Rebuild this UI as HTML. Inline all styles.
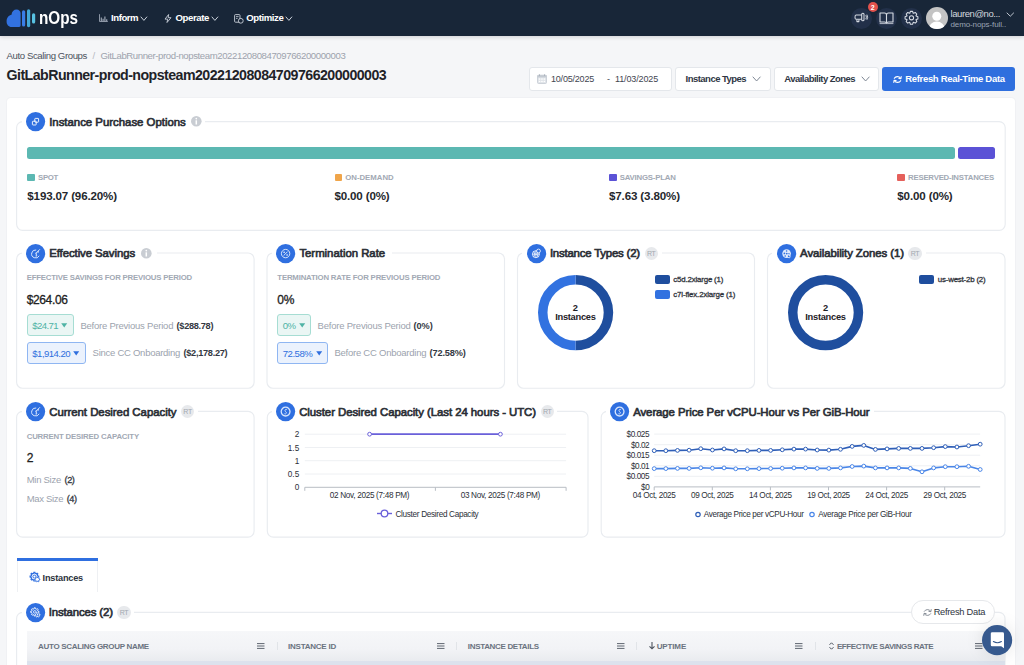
<!DOCTYPE html>
<html><head><meta charset="utf-8"><style>
html,body{margin:0;padding:0;}
body{width:1024px;height:665px;overflow:hidden;position:relative;background:#f5f6f8;font-family:"Liberation Sans",sans-serif;}
.a{position:absolute;}
.t{position:absolute;line-height:1;white-space:nowrap;}
svg.a{overflow:visible;}
</style></head><body>
<div class="a" style="left:0px;top:0px;width:1024px;height:36px;background:#182638;box-shadow:0 1px 4px rgba(20,30,45,0.18);"></div>
<svg class="a" style="left:0;top:0" width="90" height="36" viewBox="0 0 90 36">
<path d="M6.6 21.5 C6.6 17.5 9 15.4 11.5 14.8 C11.8 11.6 13.8 9.6 16.6 9.6 C19 9.6 20.6 11.4 20.6 13.2 L20.6 25.6 C20.6 26.5 20 27 19.2 27 L11.6 27 C8.6 27 6.6 24.6 6.6 21.5 Z" fill="#3272e0"/>
<rect x="22" y="10.2" width="3.2" height="16.4" rx="1.6" fill="#3a7ee6"/>
<rect x="27" y="9.2" width="3.2" height="18" rx="1.6" fill="#43a9d8"/>
<rect x="32" y="13.2" width="3.2" height="10.4" rx="1.6" fill="#58c2e2"/>
</svg>
<div class="t" style="left:38.6px;top:8.5px;font-size:18px;font-weight:700;color:#fff;transform:scaleX(0.85);transform-origin:0 0;">nOps</div>
<svg class="a" style="left:98.5px;top:14px" width="9" height="8" viewBox="0 0 9 8">
<path d="M0.5 0.2 V7.5 H8.8" fill="none" stroke="#9aa3b2" stroke-width="0.9"/>
<path d="M2.3 7.2 V3.6 M4.1 7.2 V4.8 M5.9 7.2 V2.6 M7.7 7.2 V5.2" stroke="#9aa3b2" stroke-width="1.2"/>
</svg>
<div class="t" style="left:111.00px;top:13.30px;font-size:9.6px;font-weight:700;color:#ffffff;letter-spacing:-0.444px;">Inform</div>
<svg class="a" style="left:140.4px;top:15.600000000000001px" width="7.8" height="5.4" viewBox="-1 -1 7.8 5.4"><path d="M0 0 L2.9 3.4 L5.8 0" fill="none" stroke="#c9d0da" stroke-width="1.0" stroke-linecap="round" stroke-linejoin="round"/></svg>
<svg class="a" style="left:164px;top:13.5px" width="8" height="9" viewBox="0 0 8 9">
<path d="M4.6 0.5 L1 5.1 H3.7 L3 8.5 L7 3.7 H4.2 Z" fill="none" stroke="#c9d0da" stroke-width="0.9" stroke-linejoin="round"/>
</svg>
<div class="t" style="left:175.50px;top:13.30px;font-size:9.6px;font-weight:700;color:#ffffff;letter-spacing:-0.397px;">Operate</div>
<svg class="a" style="left:211.4px;top:15.600000000000001px" width="7.8" height="5.4" viewBox="-1 -1 7.8 5.4"><path d="M0 0 L2.9 3.4 L5.8 0" fill="none" stroke="#c9d0da" stroke-width="1.0" stroke-linecap="round" stroke-linejoin="round"/></svg>
<svg class="a" style="left:233.5px;top:13.5px" width="10" height="10" viewBox="0 0 10 10">
<rect x="0.6" y="0.6" width="5.4" height="7.6" rx="0.9" fill="none" stroke="#c9d0da" stroke-width="0.9"/>
<path d="M2 2.6 H4.6 M2 4.4 H3.6" stroke="#c9d0da" stroke-width="0.8"/>
<circle cx="6.8" cy="6.8" r="2.4" fill="#182638" stroke="#c9d0da" stroke-width="0.9"/>
</svg>
<div class="t" style="left:246.30px;top:13.30px;font-size:9.6px;font-weight:700;color:#ffffff;letter-spacing:-0.442px;">Optimize</div>
<svg class="a" style="left:285.4px;top:15.600000000000001px" width="7.8" height="5.4" viewBox="-1 -1 7.8 5.4"><path d="M0 0 L2.9 3.4 L5.8 0" fill="none" stroke="#c9d0da" stroke-width="1.0" stroke-linecap="round" stroke-linejoin="round"/></svg>
<div class="a" style="left:851.0px;top:7.5px;width:21px;height:21px;background:#223049;border-radius:50%;"></div>
<div class="a" style="left:876.0px;top:7.5px;width:21px;height:21px;background:#223049;border-radius:50%;"></div>
<div class="a" style="left:901.0px;top:7.5px;width:21px;height:21px;background:#223049;border-radius:50%;"></div>
<svg class="a" style="left:852px;top:9px" width="20" height="16" viewBox="0 0 20 16">
<g fill="none" stroke="#d6dbe3" stroke-width="1.05" stroke-linejoin="round">
<path d="M9.7 6 H4 Q3 6 3 8.15 Q3 10.3 4 10.3 H9.7"/>
<rect x="9.7" y="4.2" width="2.3" height="7.6" rx="1"/>
<path d="M4.9 10.4 V12.6 H6.9 V10.4"/>
<path d="M13.8 6.2 Q15.1 8.2 13.8 10.2 M14.9 5.6 Q16.5 8.2 14.9 10.8" stroke-width="0.9"/>
</g></svg>
<div class="a" style="left:867.7px;top:1.8px;width:10px;height:10px;background:#e2524d;border-radius:50%;"></div>
<div class="t" style="left:870.75px;top:3.80px;font-size:7px;font-weight:700;color:#ffffff;">2</div>
<svg class="a" style="left:879px;top:11px" width="15" height="14" viewBox="0 0 15 14">
<path d="M1 2 H5.5 Q7.5 2 7.5 4 V12 Q7.5 11 5.5 11 H1 Z M14 2 H9.5 Q7.5 2 7.5 4 V12 Q7.5 11 9.5 11 H14 Z" fill="none" stroke="#d6dbe3" stroke-width="1.1" stroke-linejoin="round"/>
<path d="M0.6 12.6 H14.4" stroke="#d6dbe3" stroke-width="0.8"/>
</svg>
<svg class="a" style="left:0;top:0" width="1024" height="36"><g fill="none" stroke="#d6dbe3" stroke-width="1.05" stroke-linejoin="round"><path d="M916.09 16.07 L917.91 16.70 L917.91 18.90 L916.09 19.53 L915.96 19.82 L916.81 21.55 L915.25 23.11 L913.52 22.26 L913.23 22.39 L912.60 24.21 L910.40 24.21 L909.77 22.39 L909.48 22.26 L907.75 23.11 L906.19 21.55 L907.04 19.82 L906.91 19.53 L905.09 18.90 L905.09 16.70 L906.91 16.07 L907.04 15.78 L906.19 14.05 L907.75 12.49 L909.48 13.34 L909.77 13.21 L910.40 11.39 L912.60 11.39 L913.23 13.21 L913.52 13.34 L915.25 12.49 L916.81 14.05 L915.96 15.78 Z"/><circle cx="911.5" cy="17.8" r="2.1"/></g></svg>
<svg class="a" style="left:926px;top:7px" width="22" height="22" viewBox="0 0 22 22">
<defs><clipPath id="av"><circle cx="11" cy="11" r="11"/></clipPath></defs>
<circle cx="11" cy="11" r="11" fill="#c4c4c4"/>
<g clip-path="url(#av)" fill="#ffffff"><circle cx="10.8" cy="9.2" r="4.5"/><ellipse cx="10.8" cy="22" rx="8" ry="7.6"/></g>
</svg>
<div class="t" style="left:950.50px;top:9.00px;font-size:9.5px;font-weight:400;color:#d3d8df;letter-spacing:-0.420px;">lauren@no...</div>
<div class="t" style="left:950.50px;top:20.50px;font-size:8px;font-weight:400;color:#9aa4b3;letter-spacing:-0.116px;">demo-nops-full..</div>
<svg class="a" style="left:1006.3px;top:11.6px" width="8.6" height="5.2" viewBox="-1 -1 8.6 5.2"><path d="M0 0 L3.3 3.2 L6.6 0" fill="none" stroke="#c0c7d1" stroke-width="1.0" stroke-linecap="round" stroke-linejoin="round"/></svg>
<div class="t" style="left:6.50px;top:50.60px;font-size:9.6px;font-weight:400;color:#4b525d;letter-spacing:-0.397px;">Auto Scaling Groups</div>
<div class="t" style="left:92.50px;top:50.60px;font-size:9.6px;font-weight:400;color:#b5bac2;">/</div>
<div class="t" style="left:100.50px;top:50.60px;font-size:9.6px;font-weight:400;color:#9da3ad;letter-spacing:-0.411px;">GitLabRunner-prod-nopsteam20221208084709766200000003</div>
<div class="t" style="left:6.50px;top:67.70px;font-size:14.2px;font-weight:700;color:#1f2328;letter-spacing:-0.540px;">GitLabRunner-prod-nopsteam20221208084709766200000003</div>
<div class="a" style="left:528.5px;top:67px;width:143.5px;height:24px;background:#fff;border:1px solid #e4e7eb;border-radius:3px;box-sizing:border-box;"></div>
<svg class="a" style="left:536.5px;top:73.5px" width="10" height="10" viewBox="0 0 10 10">
<rect x="0.5" y="1.2" width="9" height="8.3" rx="1" fill="#dfe3e8" stroke="#c4cad2" stroke-width="0.8"/>
<rect x="0.5" y="1.2" width="9" height="2.2" fill="#c4cad2"/>
<path d="M2.5 0.3 V2 M7.5 0.3 V2" stroke="#aab1bb" stroke-width="0.9"/>
<g fill="#ffffff"><rect x="1.8" y="4.4" width="1.5" height="1.3"/><rect x="4.2" y="4.4" width="1.5" height="1.3"/><rect x="6.6" y="4.4" width="1.5" height="1.3"/><rect x="1.8" y="6.8" width="1.5" height="1.3"/><rect x="4.2" y="6.8" width="1.5" height="1.3"/><rect x="6.6" y="6.8" width="1.5" height="1.3"/></g>
</svg>
<div class="t" style="left:551.00px;top:75.20px;font-size:9px;font-weight:400;color:#3f4550;letter-spacing:-0.205px;">10/05/2025</div>
<div class="t" style="left:607.00px;top:75.20px;font-size:9px;font-weight:400;color:#3f4550;">-</div>
<div class="t" style="left:615.00px;top:75.20px;font-size:9px;font-weight:400;color:#3f4550;letter-spacing:-0.138px;">11/03/2025</div>
<div class="a" style="left:675px;top:67px;width:95.5px;height:24px;background:#fff;border:1px solid #e4e7eb;border-radius:3px;box-sizing:border-box;"></div>
<div class="t" style="left:685.60px;top:74.40px;font-size:9.5px;font-weight:700;color:#2f3744;letter-spacing:-0.531px;">Instance Types</div>
<svg class="a" style="left:751.6px;top:76.2px" width="9.2" height="6.0" viewBox="-1 -1 9.2 6.0"><path d="M0 0 L3.6 4.0 L7.2 0" fill="none" stroke="#7d8794" stroke-width="1.0" stroke-linecap="round" stroke-linejoin="round"/></svg>
<div class="a" style="left:773.8px;top:67px;width:105.7px;height:24px;background:#fff;border:1px solid #e4e7eb;border-radius:3px;box-sizing:border-box;"></div>
<div class="t" style="left:784.30px;top:74.40px;font-size:9.5px;font-weight:700;color:#2f3744;letter-spacing:-0.535px;">Availability Zones</div>
<svg class="a" style="left:861.2px;top:76.2px" width="9.2" height="6.0" viewBox="-1 -1 9.2 6.0"><path d="M0 0 L3.6 4.0 L7.2 0" fill="none" stroke="#7d8794" stroke-width="1.0" stroke-linecap="round" stroke-linejoin="round"/></svg>
<div class="a" style="left:882.3px;top:67px;width:133px;height:24px;background:#2f6fde;border-radius:3px;"></div>
<svg class="a" style="left:893px;top:75.5px" width="9" height="7" viewBox="0 0 9 7">
<path d="M7.6 2.2 Q6.4 0.5 4.3 0.6 Q2.3 0.7 1.3 2.3 M1.4 4.8 Q2.6 6.5 4.7 6.4 Q6.7 6.3 7.7 4.7" fill="none" stroke="#fff" stroke-width="1.1" stroke-linecap="round"/>
<path d="M8.2 0.6 L7.9 2.7 L5.9 2.4 M0.8 6.4 L1.1 4.3 L3.1 4.6" fill="none" stroke="#fff" stroke-width="1.1" stroke-linecap="round" stroke-linejoin="round"/>
</svg>
<div class="t" style="left:905.20px;top:74.40px;font-size:9.5px;font-weight:700;color:#ffffff;letter-spacing:-0.317px;">Refresh Real-Time Data</div>
<div class="a" style="left:6.5px;top:98px;width:1008.5px;height:600px;background:#fff;border-radius:3.5px;box-shadow:0 0 1.5px rgba(40,50,70,0.10);"></div>
<svg class="a" style="left:14px;top:119px" width="995" height="115"><rect x="2.60" y="2.60" width="988.60" height="108.70" rx="6" fill="none" stroke="#e9ecf0" stroke-width="1.15"/></svg>
<div class="a" style="left:22px;top:113.5px;width:183px;height:16px;background:#fff;"></div>
<svg class="a" style="left:26.10px;top:111.90px" width="19.2" height="19.2" viewBox="-9.6 -9.6 19.2 19.2"><circle cx="0" cy="0" r="9.6" fill="#2f6fe0"/><g fill="none" stroke="#fff" stroke-width="0.9"><rect x="-3.2" y="-0.4" width="3.8" height="3.8" rx="0.6"/><rect x="-0.8" y="-3.2" width="3.8" height="3.8" rx="0.6"/></g></svg>
<div class="t" style="left:49.20px;top:116.50px;font-size:11.4px;font-weight:400;color:#2a2e35;-webkit-text-stroke:0.65px #2a2e35;letter-spacing:-0.007px;">Instance Purchase Options</div>
<svg class="a" style="left:190.70px;top:116.20px" width="10.6" height="10.6" viewBox="-5.3 -5.3 10.6 10.6"><circle r="5.3" fill="#c9cdd3"/><rect x="-0.75" y="-1" width="1.5" height="4.2" fill="#fff"/><circle cx="0" cy="-2.7" r="0.85" fill="#fff"/></svg>
<div class="a" style="left:26.7px;top:146.6px;width:928.7px;height:12.3px;background:#5cb8b2;border-radius:2.5px;"></div>
<div class="a" style="left:958.1px;top:146.6px;width:36.9px;height:12.3px;background:#5b52d6;border-radius:2.5px;"></div>
<div class="a" style="left:27.3px;top:173.7px;width:7.6px;height:7.6px;background:#5cb8b2;border-radius:1px;"></div>
<div class="t" style="left:38.00px;top:174.40px;font-size:7.8px;font-weight:700;color:#a2a9b4;letter-spacing:-0.309px;">SPOT</div>
<div class="t" style="left:27.30px;top:190.40px;font-size:11.6px;font-weight:700;color:#25282d;letter-spacing:-0.158px;">$193.07 (96.20%)</div>
<div class="a" style="left:334.5px;top:173.7px;width:7.6px;height:7.6px;background:#f0a54a;border-radius:1px;"></div>
<div class="t" style="left:345.20px;top:174.40px;font-size:7.8px;font-weight:700;color:#a2a9b4;letter-spacing:-0.003px;">ON-DEMAND</div>
<div class="t" style="left:334.50px;top:190.40px;font-size:11.6px;font-weight:700;color:#25282d;letter-spacing:-0.174px;">$0.00 (0%)</div>
<div class="a" style="left:609px;top:173.7px;width:7.6px;height:7.6px;background:#5b52d6;border-radius:1px;"></div>
<div class="t" style="left:619.70px;top:174.40px;font-size:7.8px;font-weight:700;color:#a2a9b4;letter-spacing:-0.197px;">SAVINGS-PLAN</div>
<div class="t" style="left:609.00px;top:190.40px;font-size:11.6px;font-weight:700;color:#25282d;letter-spacing:-0.144px;">$7.63 (3.80%)</div>
<div class="a" style="left:897.3px;top:173.7px;width:7.6px;height:7.6px;background:#e5605b;border-radius:1px;"></div>
<div class="t" style="left:908.00px;top:174.40px;font-size:7.8px;font-weight:700;color:#a2a9b4;letter-spacing:-0.215px;">RESERVED-INSTANCES</div>
<div class="t" style="left:897.30px;top:190.40px;font-size:11.6px;font-weight:700;color:#25282d;letter-spacing:-0.144px;">$0.00 (0%)</div>
<svg class="a" style="left:14px;top:251px" width="244" height="141"><rect x="2.60" y="2.00" width="237.50" height="135.25" rx="6" fill="none" stroke="#e9ecf0" stroke-width="1.15"/></svg>
<svg class="a" style="left:265px;top:251px" width="243" height="141"><rect x="2.00" y="2.00" width="237.50" height="135.25" rx="6" fill="none" stroke="#e9ecf0" stroke-width="1.15"/></svg>
<svg class="a" style="left:515px;top:251px" width="243" height="141"><rect x="2.50" y="2.00" width="237.00" height="135.25" rx="6" fill="none" stroke="#e9ecf0" stroke-width="1.15"/></svg>
<svg class="a" style="left:765px;top:251px" width="243" height="141"><rect x="2.50" y="2.00" width="237.50" height="135.25" rx="6" fill="none" stroke="#e9ecf0" stroke-width="1.15"/></svg>
<div class="a" style="left:22px;top:245.2px;width:135px;height:16px;background:#fff;"></div>
<svg class="a" style="left:25.90px;top:243.60px" width="19.2" height="19.2" viewBox="-9.6 -9.6 19.2 19.2"><circle cx="0" cy="0" r="9.6" fill="#2f6fe0"/><g fill="none" stroke="#d9e6fc" stroke-width="1"><path d="M0.6 -3.6 A4 4 0 1 0 3.6 2.2"/><path d="M2.4 -2.4 L4.3 -4.3"/></g><rect x="1.6" y="-2.6" width="1.6" height="1.6" fill="#d9e6fc"/><g transform="translate(0.9 0.4) scale(0.85)"><path d="M0.7 -1.6 Q-1 -1.7 -1 -0.6 Q-1 0.2 -0.1 0.6 Q0.7 1 0.4 1.9 Q0 2.6 -1.1 2.3 M-0.2 -2.3 V3" fill="none" stroke="#d9e6fc" stroke-width="0.9"/></g></svg>
<div class="t" style="left:49.20px;top:248.20px;font-size:11.4px;font-weight:400;color:#2a2e35;-webkit-text-stroke:0.65px #2a2e35;letter-spacing:-0.079px;">Effective Savings</div>
<svg class="a" style="left:140.80px;top:248.20px" width="10.6" height="10.6" viewBox="-5.3 -5.3 10.6 10.6"><circle r="5.3" fill="#c9cdd3"/><rect x="-0.75" y="-1" width="1.5" height="4.2" fill="#fff"/><circle cx="0" cy="-2.7" r="0.85" fill="#fff"/></svg>
<div class="t" style="left:26.70px;top:274.20px;font-size:7.8px;font-weight:700;color:#a2a9b4;letter-spacing:-0.202px;">EFFECTIVE SAVINGS FOR PREVIOUS PERIOD</div>
<div class="t" style="left:26.70px;top:293.60px;font-size:12px;font-weight:400;color:#222;-webkit-text-stroke:0.3px #222;letter-spacing:-0.368px;">$264.06</div>
<div class="a" style="left:26.5px;top:314.3px;width:47.1px;height:21.3px;background:#eaf6f4;border:1px solid #a6ddd3;border-radius:3px;box-sizing:border-box;"></div>
<div class="t" style="left:32.30px;top:320.50px;font-size:9.6px;font-weight:400;color:#4fb3a5;letter-spacing:-0.594px;">$24.71</div>
<svg class="a" style="left:61.10px;top:322.60px" width="7" height="5" viewBox="0 0 7 5"><path d="M0.2 0.3 H6.2 L3.2 4.6 Z" fill="#4fb3a5"/></svg>
<div class="t" style="left:80.40px;top:320.50px;font-size:9.5px;font-weight:400;color:#9ca3ae;letter-spacing:-0.222px;">Before Previous Period</div>
<div class="t" style="left:176.60px;top:321.50px;font-size:9.2px;font-weight:700;color:#333842;letter-spacing:-0.309px;">($288.78)</div>
<div class="a" style="left:26.5px;top:342.4px;width:59.3px;height:21.3px;background:#ebf2fd;border:1px solid #8fb6f2;border-radius:3px;box-sizing:border-box;"></div>
<div class="t" style="left:32.30px;top:348.60px;font-size:9.6px;font-weight:400;color:#2f6fde;letter-spacing:-0.545px;">$1,914.20</div>
<svg class="a" style="left:73.30px;top:350.70px" width="7" height="5" viewBox="0 0 7 5"><path d="M0.2 0.3 H6.2 L3.2 4.6 Z" fill="#2f6fde"/></svg>
<div class="t" style="left:92.60px;top:348.30px;font-size:9.5px;font-weight:400;color:#9ca3ae;letter-spacing:-0.264px;">Since CC Onboarding</div>
<div class="t" style="left:183.50px;top:349.30px;font-size:9.2px;font-weight:700;color:#333842;letter-spacing:-0.287px;">($2,178.27)</div>
<div class="a" style="left:272px;top:245.2px;width:120px;height:16px;background:#fff;"></div>
<svg class="a" style="left:276.40px;top:243.60px" width="19.2" height="19.2" viewBox="-9.6 -9.6 19.2 19.2"><circle cx="0" cy="0" r="9.6" fill="#2f6fe0"/><g fill="none" stroke="#fff" stroke-width="0.8"><circle r="4.2"/><path d="M-2 2 L2 -2"/></g><circle cx="-1.5" cy="-1.4" r="0.8" fill="#fff"/><circle cx="1.5" cy="1.4" r="0.8" fill="#fff"/></svg>
<div class="t" style="left:299.40px;top:248.20px;font-size:11.4px;font-weight:400;color:#2a2e35;-webkit-text-stroke:0.65px #2a2e35;letter-spacing:-0.023px;">Termination Rate</div>
<div class="t" style="left:277.30px;top:274.20px;font-size:7.8px;font-weight:700;color:#a2a9b4;letter-spacing:-0.183px;">TERMINATION RATE FOR PREVIOUS PERIOD</div>
<div class="t" style="left:277.30px;top:293.60px;font-size:12px;font-weight:400;color:#222;-webkit-text-stroke:0.3px #222;letter-spacing:-0.172px;">0%</div>
<div class="a" style="left:277px;top:314.3px;width:34.3px;height:21.3px;background:#eaf6f4;border:1px solid #a6ddd3;border-radius:3px;box-sizing:border-box;"></div>
<div class="t" style="left:282.80px;top:320.50px;font-size:9.6px;font-weight:400;color:#4fb3a5;letter-spacing:-0.688px;">0%</div>
<svg class="a" style="left:298.80px;top:322.60px" width="7" height="5" viewBox="0 0 7 5"><path d="M0.2 0.3 H6.2 L3.2 4.6 Z" fill="#4fb3a5"/></svg>
<div class="t" style="left:317.60px;top:320.50px;font-size:9.5px;font-weight:400;color:#9ca3ae;letter-spacing:-0.213px;">Before Previous Period</div>
<div class="t" style="left:413.60px;top:321.50px;font-size:9.2px;font-weight:700;color:#333842;letter-spacing:-0.081px;">(0%)</div>
<div class="a" style="left:277px;top:342.4px;width:51px;height:21.3px;background:#ebf2fd;border:1px solid #8fb6f2;border-radius:3px;box-sizing:border-box;"></div>
<div class="t" style="left:282.80px;top:348.60px;font-size:9.6px;font-weight:400;color:#2f6fde;letter-spacing:-0.510px;">72.58%</div>
<svg class="a" style="left:315.50px;top:350.70px" width="7" height="5" viewBox="0 0 7 5"><path d="M0.2 0.3 H6.2 L3.2 4.6 Z" fill="#2f6fde"/></svg>
<div class="t" style="left:334.40px;top:348.30px;font-size:9.5px;font-weight:400;color:#9ca3ae;letter-spacing:-0.237px;">Before CC Onboarding</div>
<div class="t" style="left:429.60px;top:349.30px;font-size:9.2px;font-weight:700;color:#333842;letter-spacing:-0.154px;">(72.58%)</div>
<div class="a" style="left:522px;top:245.2px;width:140px;height:16px;background:#fff;"></div>
<svg class="a" style="left:526.60px;top:243.60px" width="19.2" height="19.2" viewBox="-9.6 -9.6 19.2 19.2"><circle cx="0" cy="0" r="9.6" fill="#2f6fe0"/><g fill="none" stroke="#fff" stroke-width="0.8"><circle cx="-0.7" cy="0.6" r="3.5"/><path d="M-4.2 0.6 H2.8 M-0.7 -2.9 V4.1 M-2.8 -2.1 Q-0.7 0.6 -2.8 3.3 M1.4 -2.1 Q-0.7 0.6 1.4 3.3"/></g><circle cx="1.9" cy="-2.6" r="1.9" fill="#2f6fe0" stroke="#fff" stroke-width="0.8"/></svg>
<div class="t" style="left:549.90px;top:248.20px;font-size:11.4px;font-weight:400;color:#2a2e35;-webkit-text-stroke:0.65px #2a2e35;letter-spacing:-0.193px;">Instance Types (2)</div>
<div class="a" style="left:644.6px;top:246.6px;width:13.2px;height:13.2px;background:#e7e9ec;border-radius:50%;"></div>
<div class="t" style="left:646.90px;top:249.80px;font-size:7px;font-weight:400;color:#a3a8b0;letter-spacing:-0.303px;">RT</div>
<svg class="a" style="left:537.80px;top:275.10px" width="75.2" height="75.2" viewBox="-37.6 -37.6 75.2 75.2"><path d="M0 -32.85 A32.85 32.85 0 0 1 0 32.85" fill="none" stroke="#1f4e9e" stroke-width="9.5"/><path d="M0 32.85 A32.85 32.85 0 0 1 0 -32.85" fill="none" stroke="#3272e0" stroke-width="9.5"/></svg>
<div class="t" style="left:572.81px;top:304.30px;font-size:9.3px;font-weight:700;color:#1e2126;">2</div>
<div class="t" style="left:555.20px;top:313.10px;font-size:9.3px;font-weight:700;color:#1e2126;letter-spacing:-0.278px;">Instances</div>
<div class="a" style="left:654.7px;top:275.1px;width:15.3px;height:8.7px;background:#1f4e9e;border-radius:2px;"></div>
<div class="t" style="left:673.30px;top:276.00px;font-size:7.9px;font-weight:400;color:#30343b;-webkit-text-stroke:0.3px #30343b;letter-spacing:-0.180px;">c5d.2xlarge (1)</div>
<div class="a" style="left:654.7px;top:290.4px;width:15.3px;height:8.7px;background:#3272e0;border-radius:2px;"></div>
<div class="t" style="left:673.30px;top:291.30px;font-size:7.9px;font-weight:400;color:#30343b;-webkit-text-stroke:0.3px #30343b;letter-spacing:-0.149px;">c7i-flex.2xlarge (1)</div>
<div class="a" style="left:772px;top:245.2px;width:154px;height:16px;background:#fff;"></div>
<svg class="a" style="left:776.60px;top:243.60px" width="19.2" height="19.2" viewBox="-9.6 -9.6 19.2 19.2"><circle cx="0" cy="0" r="9.6" fill="#2f6fe0"/><circle r="4.3" fill="#dfe9fb"/><g fill="#2f6fe0"><circle cx="0" cy="-2.6" r="0.8"/><circle cx="-2.2" cy="-0.2" r="0.9"/><circle cx="0.2" cy="0" r="0.9"/><circle cx="2.4" cy="0.2" r="0.7"/><circle cx="-1.4" cy="2.4" r="0.8"/></g><path d="M0.6 1.8 Q2 1 3.6 2.2 L3.2 4.2 L1 3.8 Z" fill="#2f6fe0" stroke="#fff" stroke-width="0.7"/></svg>
<div class="t" style="left:800.10px;top:248.20px;font-size:11.4px;font-weight:400;color:#2a2e35;-webkit-text-stroke:0.65px #2a2e35;letter-spacing:-0.077px;">Availability Zones (1)</div>
<div class="a" style="left:908.4px;top:246.6px;width:13.2px;height:13.2px;background:#e7e9ec;border-radius:50%;"></div>
<div class="t" style="left:910.70px;top:249.80px;font-size:7px;font-weight:400;color:#a3a8b0;letter-spacing:-0.303px;">RT</div>
<svg class="a" style="left:787.90px;top:275.10px" width="75.2" height="75.2" viewBox="-37.6 -37.6 75.2 75.2"><circle r="32.85" fill="none" stroke="#1f4e9e" stroke-width="9.5"/></svg>
<div class="t" style="left:822.91px;top:304.30px;font-size:9.3px;font-weight:700;color:#1e2126;">2</div>
<div class="t" style="left:805.30px;top:313.10px;font-size:9.3px;font-weight:700;color:#1e2126;letter-spacing:-0.278px;">Instances</div>
<div class="a" style="left:919px;top:275.1px;width:15.3px;height:8.7px;background:#1f4e9e;border-radius:2px;"></div>
<div class="t" style="left:937.80px;top:276.00px;font-size:7.9px;font-weight:400;color:#30343b;-webkit-text-stroke:0.3px #30343b;letter-spacing:-0.199px;">us-west-2b (2)</div>
<svg class="a" style="left:14px;top:409px" width="244" height="132"><rect x="2.60" y="2.40" width="237.50" height="125.70" rx="6" fill="none" stroke="#e9ecf0" stroke-width="1.15"/></svg>
<svg class="a" style="left:265px;top:409px" width="326" height="132"><rect x="2.30" y="2.40" width="320.70" height="125.70" rx="6" fill="none" stroke="#e9ecf0" stroke-width="1.15"/></svg>
<svg class="a" style="left:599px;top:409px" width="409" height="132"><rect x="2.20" y="2.40" width="403.80" height="125.70" rx="6" fill="none" stroke="#e9ecf0" stroke-width="1.15"/></svg>
<div class="a" style="left:22px;top:403.6px;width:176px;height:16px;background:#fff;"></div>
<svg class="a" style="left:25.90px;top:402.00px" width="19.2" height="19.2" viewBox="-9.6 -9.6 19.2 19.2"><circle cx="0" cy="0" r="9.6" fill="#2f6fe0"/><g fill="none" stroke="#d9e6fc" stroke-width="1"><path d="M0.6 -3.6 A4 4 0 1 0 3.6 2.2"/><path d="M2.4 -2.4 L4.3 -4.3"/></g><rect x="1.6" y="-2.6" width="1.6" height="1.6" fill="#d9e6fc"/><g transform="translate(0.9 0.4) scale(0.85)"><path d="M0.7 -1.6 Q-1 -1.7 -1 -0.6 Q-1 0.2 -0.1 0.6 Q0.7 1 0.4 1.9 Q0 2.6 -1.1 2.3 M-0.2 -2.3 V3" fill="none" stroke="#d9e6fc" stroke-width="0.9"/></g></svg>
<div class="t" style="left:49.20px;top:406.60px;font-size:11.4px;font-weight:400;color:#2a2e35;-webkit-text-stroke:0.65px #2a2e35;letter-spacing:-0.024px;">Current Desired Capacity</div>
<div class="a" style="left:181.0px;top:405.0px;width:13.2px;height:13.2px;background:#e7e9ec;border-radius:50%;"></div>
<div class="t" style="left:183.30px;top:408.20px;font-size:7px;font-weight:400;color:#a3a8b0;letter-spacing:-0.303px;">RT</div>
<div class="t" style="left:26.70px;top:433.00px;font-size:7.8px;font-weight:700;color:#a2a9b4;letter-spacing:-0.172px;">CURRENT DESIRED CAPACITY</div>
<div class="t" style="left:26.70px;top:451.60px;font-size:12px;font-weight:400;color:#222;-webkit-text-stroke:0.3px #222;">2</div>
<div class="t" style="left:26.70px;top:474.90px;font-size:9.5px;font-weight:400;color:#9ca3ae;letter-spacing:-0.279px;">Min Size</div>
<div class="t" style="left:64.60px;top:475.90px;font-size:9.2px;font-weight:400;color:#333842;-webkit-text-stroke:0.3px #333842;letter-spacing:-0.515px;">(2)</div>
<div class="t" style="left:26.70px;top:494.40px;font-size:9.5px;font-weight:400;color:#9ca3ae;letter-spacing:-0.309px;">Max Size</div>
<div class="t" style="left:66.80px;top:495.40px;font-size:9.2px;font-weight:400;color:#333842;-webkit-text-stroke:0.3px #333842;letter-spacing:-0.515px;">(4)</div>
<div class="a" style="left:272px;top:403.6px;width:285px;height:16px;background:#fff;"></div>
<svg class="a" style="left:276.30px;top:402.00px" width="19.2" height="19.2" viewBox="-9.6 -9.6 19.2 19.2"><circle cx="0" cy="0" r="9.6" fill="#2f6fe0"/><circle r="4.4" fill="none" stroke="#d9e6fc" stroke-width="1.3"/><path d="M0.9 -2.3 Q-0.6 -2.4 -0.6 -1.1 Q-0.6 -0.2 0.3 0.3 Q1 0.8 0.7 1.7 Q0.3 2.6 -0.8 2.3" fill="none" stroke="#d9e6fc" stroke-width="0.9" stroke-linecap="round"/></svg>
<div class="t" style="left:299.20px;top:406.60px;font-size:11.4px;font-weight:400;color:#2a2e35;-webkit-text-stroke:0.65px #2a2e35;letter-spacing:-0.054px;">Cluster Desired Capacity (Last 24 hours - UTC)</div>
<div class="a" style="left:540.6px;top:405.0px;width:13.2px;height:13.2px;background:#e7e9ec;border-radius:50%;"></div>
<div class="t" style="left:542.90px;top:408.20px;font-size:7px;font-weight:400;color:#a3a8b0;letter-spacing:-0.303px;">RT</div>
<svg class="a" style="left:0;top:0" width="1024" height="665"><line x1="304.8" x2="566.1" y1="434.2" y2="434.2" stroke="#eef0f3" stroke-width="1"/><line x1="304.8" x2="566.1" y1="447.5" y2="447.5" stroke="#eef0f3" stroke-width="1"/><line x1="304.8" x2="566.1" y1="460.7" y2="460.7" stroke="#eef0f3" stroke-width="1"/><line x1="304.8" x2="566.1" y1="474.0" y2="474.0" stroke="#eef0f3" stroke-width="1"/><line x1="304.8" x2="566.1" y1="487.3" y2="487.3" stroke="#b8bdc4" stroke-width="1"/><line x1="304.8" x2="304.8" y1="487.3" y2="490.8" stroke="#b8bdc4" stroke-width="1"/><line x1="435.4" x2="435.4" y1="487.3" y2="490.8" stroke="#b8bdc4" stroke-width="1"/><line x1="566.1" x2="566.1" y1="487.3" y2="490.8" stroke="#b8bdc4" stroke-width="1"/><line x1="369.6" x2="500.4" y1="434.2" y2="434.2" stroke="#6a60da" stroke-width="1.8"/><circle cx="369.6" cy="434.2" r="1.9" fill="#fff" stroke="#6a60da" stroke-width="1"/><circle cx="500.4" cy="434.2" r="1.9" fill="#fff" stroke="#6a60da" stroke-width="1"/><line x1="377" x2="392" y1="513.5" y2="513.5" stroke="#6a60da" stroke-width="1.4"/><circle cx="384.5" cy="513.5" r="3.3" fill="#fff" stroke="#6a60da" stroke-width="1.3"/></svg>
<div class="t" style="left:294.64px;top:431.20px;font-size:8.2px;font-weight:400;color:#2c3038;">2</div>
<div class="t" style="left:287.80px;top:444.50px;font-size:8.2px;font-weight:400;color:#2c3038;">1.5</div>
<div class="t" style="left:294.64px;top:457.70px;font-size:8.2px;font-weight:400;color:#2c3038;">1</div>
<div class="t" style="left:287.80px;top:471.00px;font-size:8.2px;font-weight:400;color:#2c3038;">0.5</div>
<div class="t" style="left:294.64px;top:484.30px;font-size:8.2px;font-weight:400;color:#2c3038;">0</div>
<div class="t" style="left:329.85px;top:492.20px;font-size:8.2px;font-weight:400;color:#2c3038;letter-spacing:-0.316px;">02 Nov, 2025 (7:48 PM)</div>
<div class="t" style="left:460.65px;top:492.20px;font-size:8.2px;font-weight:400;color:#2c3038;letter-spacing:-0.316px;">03 Nov, 2025 (7:48 PM)</div>
<div class="t" style="left:395.50px;top:511.20px;font-size:8.2px;font-weight:400;color:#2c3038;letter-spacing:-0.320px;">Cluster Desired Capacity</div>
<div class="a" style="left:606px;top:403.6px;width:268px;height:16px;background:#fff;"></div>
<svg class="a" style="left:610.30px;top:402.00px" width="19.2" height="19.2" viewBox="-9.6 -9.6 19.2 19.2"><circle cx="0" cy="0" r="9.6" fill="#2f6fe0"/><circle r="4.4" fill="none" stroke="#d9e6fc" stroke-width="1.3"/><path d="M0.9 -2.3 Q-0.6 -2.4 -0.6 -1.1 Q-0.6 -0.2 0.3 0.3 Q1 0.8 0.7 1.7 Q0.3 2.6 -0.8 2.3" fill="none" stroke="#d9e6fc" stroke-width="0.9" stroke-linecap="round"/></svg>
<div class="t" style="left:633.20px;top:406.60px;font-size:11.4px;font-weight:400;color:#2a2e35;-webkit-text-stroke:0.65px #2a2e35;letter-spacing:-0.077px;">Average Price Per vCPU-Hour vs Per GiB-Hour</div>
<svg class="a" style="left:0;top:0" width="1024" height="665"><line x1="654.2" x2="980.2" y1="434.1" y2="434.1" stroke="#eef0f3" stroke-width="1"/><line x1="654.2" x2="980.2" y1="444.7" y2="444.7" stroke="#eef0f3" stroke-width="1"/><line x1="654.2" x2="980.2" y1="455.2" y2="455.2" stroke="#eef0f3" stroke-width="1"/><line x1="654.2" x2="980.2" y1="465.8" y2="465.8" stroke="#eef0f3" stroke-width="1"/><line x1="654.2" x2="980.2" y1="476.3" y2="476.3" stroke="#eef0f3" stroke-width="1"/><line x1="654.2" x2="980.2" y1="486.9" y2="486.9" stroke="#b8bdc4" stroke-width="1"/><line x1="654.2" x2="654.2" y1="486.9" y2="490.4" stroke="#b8bdc4" stroke-width="1"/><line x1="712.3" x2="712.3" y1="486.9" y2="490.4" stroke="#b8bdc4" stroke-width="1"/><line x1="770.4" x2="770.4" y1="486.9" y2="490.4" stroke="#b8bdc4" stroke-width="1"/><line x1="828.5" x2="828.5" y1="486.9" y2="490.4" stroke="#b8bdc4" stroke-width="1"/><line x1="886.6" x2="886.6" y1="486.9" y2="490.4" stroke="#b8bdc4" stroke-width="1"/><line x1="944.7" x2="944.7" y1="486.9" y2="490.4" stroke="#b8bdc4" stroke-width="1"/><polyline points="654.20,450.7 665.84,450.7 677.49,450.4 689.13,450.2 700.77,448.7 712.42,450.0 724.06,448.9 735.70,450.7 747.34,450.7 758.99,450.4 770.63,450.4 782.27,449.8 793.92,449.1 805.56,449.1 817.20,450.0 828.85,450.1 840.49,449.3 852.13,446.4 863.77,445.4 875.42,449.4 887.06,448.9 898.70,448.4 910.35,448.4 921.99,448.4 933.63,447.7 945.28,446.6 956.92,447.0 968.56,445.7 980.20,444.2" fill="none" stroke="#2f5fb8" stroke-width="1.6" stroke-linejoin="round"/><circle cx="654.20" cy="450.7" r="1.9" fill="#fff" stroke="#2f5fb8" stroke-width="1"/><circle cx="665.84" cy="450.7" r="1.9" fill="#fff" stroke="#2f5fb8" stroke-width="1"/><circle cx="677.49" cy="450.4" r="1.9" fill="#fff" stroke="#2f5fb8" stroke-width="1"/><circle cx="689.13" cy="450.2" r="1.9" fill="#fff" stroke="#2f5fb8" stroke-width="1"/><circle cx="700.77" cy="448.7" r="1.9" fill="#fff" stroke="#2f5fb8" stroke-width="1"/><circle cx="712.42" cy="450.0" r="1.9" fill="#fff" stroke="#2f5fb8" stroke-width="1"/><circle cx="724.06" cy="448.9" r="1.9" fill="#fff" stroke="#2f5fb8" stroke-width="1"/><circle cx="735.70" cy="450.7" r="1.9" fill="#fff" stroke="#2f5fb8" stroke-width="1"/><circle cx="747.34" cy="450.7" r="1.9" fill="#fff" stroke="#2f5fb8" stroke-width="1"/><circle cx="758.99" cy="450.4" r="1.9" fill="#fff" stroke="#2f5fb8" stroke-width="1"/><circle cx="770.63" cy="450.4" r="1.9" fill="#fff" stroke="#2f5fb8" stroke-width="1"/><circle cx="782.27" cy="449.8" r="1.9" fill="#fff" stroke="#2f5fb8" stroke-width="1"/><circle cx="793.92" cy="449.1" r="1.9" fill="#fff" stroke="#2f5fb8" stroke-width="1"/><circle cx="805.56" cy="449.1" r="1.9" fill="#fff" stroke="#2f5fb8" stroke-width="1"/><circle cx="817.20" cy="450.0" r="1.9" fill="#fff" stroke="#2f5fb8" stroke-width="1"/><circle cx="828.85" cy="450.1" r="1.9" fill="#fff" stroke="#2f5fb8" stroke-width="1"/><circle cx="840.49" cy="449.3" r="1.9" fill="#fff" stroke="#2f5fb8" stroke-width="1"/><circle cx="852.13" cy="446.4" r="1.9" fill="#fff" stroke="#2f5fb8" stroke-width="1"/><circle cx="863.77" cy="445.4" r="1.9" fill="#fff" stroke="#2f5fb8" stroke-width="1"/><circle cx="875.42" cy="449.4" r="1.9" fill="#fff" stroke="#2f5fb8" stroke-width="1"/><circle cx="887.06" cy="448.9" r="1.9" fill="#fff" stroke="#2f5fb8" stroke-width="1"/><circle cx="898.70" cy="448.4" r="1.9" fill="#fff" stroke="#2f5fb8" stroke-width="1"/><circle cx="910.35" cy="448.4" r="1.9" fill="#fff" stroke="#2f5fb8" stroke-width="1"/><circle cx="921.99" cy="448.4" r="1.9" fill="#fff" stroke="#2f5fb8" stroke-width="1"/><circle cx="933.63" cy="447.7" r="1.9" fill="#fff" stroke="#2f5fb8" stroke-width="1"/><circle cx="945.28" cy="446.6" r="1.9" fill="#fff" stroke="#2f5fb8" stroke-width="1"/><circle cx="956.92" cy="447.0" r="1.9" fill="#fff" stroke="#2f5fb8" stroke-width="1"/><circle cx="968.56" cy="445.7" r="1.9" fill="#fff" stroke="#2f5fb8" stroke-width="1"/><circle cx="980.20" cy="444.2" r="1.9" fill="#fff" stroke="#2f5fb8" stroke-width="1"/><polyline points="654.20,468.6 665.84,468.6 677.49,468.4 689.13,468.4 700.77,467.8 712.42,468.2 724.06,467.9 735.70,468.8 747.34,468.8 758.99,468.6 770.63,468.5 782.27,468.2 793.92,467.9 805.56,467.9 817.20,468.4 828.85,468.4 840.49,467.9 852.13,466.5 863.77,466.1 875.42,467.9 887.06,467.9 898.70,467.9 910.35,468.4 921.99,471.8 933.63,467.9 945.28,466.7 956.92,466.7 968.56,466.3 980.20,469.5" fill="none" stroke="#4a86e8" stroke-width="1.6" stroke-linejoin="round"/><circle cx="654.20" cy="468.6" r="1.9" fill="#fff" stroke="#4a86e8" stroke-width="1"/><circle cx="665.84" cy="468.6" r="1.9" fill="#fff" stroke="#4a86e8" stroke-width="1"/><circle cx="677.49" cy="468.4" r="1.9" fill="#fff" stroke="#4a86e8" stroke-width="1"/><circle cx="689.13" cy="468.4" r="1.9" fill="#fff" stroke="#4a86e8" stroke-width="1"/><circle cx="700.77" cy="467.8" r="1.9" fill="#fff" stroke="#4a86e8" stroke-width="1"/><circle cx="712.42" cy="468.2" r="1.9" fill="#fff" stroke="#4a86e8" stroke-width="1"/><circle cx="724.06" cy="467.9" r="1.9" fill="#fff" stroke="#4a86e8" stroke-width="1"/><circle cx="735.70" cy="468.8" r="1.9" fill="#fff" stroke="#4a86e8" stroke-width="1"/><circle cx="747.34" cy="468.8" r="1.9" fill="#fff" stroke="#4a86e8" stroke-width="1"/><circle cx="758.99" cy="468.6" r="1.9" fill="#fff" stroke="#4a86e8" stroke-width="1"/><circle cx="770.63" cy="468.5" r="1.9" fill="#fff" stroke="#4a86e8" stroke-width="1"/><circle cx="782.27" cy="468.2" r="1.9" fill="#fff" stroke="#4a86e8" stroke-width="1"/><circle cx="793.92" cy="467.9" r="1.9" fill="#fff" stroke="#4a86e8" stroke-width="1"/><circle cx="805.56" cy="467.9" r="1.9" fill="#fff" stroke="#4a86e8" stroke-width="1"/><circle cx="817.20" cy="468.4" r="1.9" fill="#fff" stroke="#4a86e8" stroke-width="1"/><circle cx="828.85" cy="468.4" r="1.9" fill="#fff" stroke="#4a86e8" stroke-width="1"/><circle cx="840.49" cy="467.9" r="1.9" fill="#fff" stroke="#4a86e8" stroke-width="1"/><circle cx="852.13" cy="466.5" r="1.9" fill="#fff" stroke="#4a86e8" stroke-width="1"/><circle cx="863.77" cy="466.1" r="1.9" fill="#fff" stroke="#4a86e8" stroke-width="1"/><circle cx="875.42" cy="467.9" r="1.9" fill="#fff" stroke="#4a86e8" stroke-width="1"/><circle cx="887.06" cy="467.9" r="1.9" fill="#fff" stroke="#4a86e8" stroke-width="1"/><circle cx="898.70" cy="467.9" r="1.9" fill="#fff" stroke="#4a86e8" stroke-width="1"/><circle cx="910.35" cy="468.4" r="1.9" fill="#fff" stroke="#4a86e8" stroke-width="1"/><circle cx="921.99" cy="471.8" r="1.9" fill="#fff" stroke="#4a86e8" stroke-width="1"/><circle cx="933.63" cy="467.9" r="1.9" fill="#fff" stroke="#4a86e8" stroke-width="1"/><circle cx="945.28" cy="466.7" r="1.9" fill="#fff" stroke="#4a86e8" stroke-width="1"/><circle cx="956.92" cy="466.7" r="1.9" fill="#fff" stroke="#4a86e8" stroke-width="1"/><circle cx="968.56" cy="466.3" r="1.9" fill="#fff" stroke="#4a86e8" stroke-width="1"/><circle cx="980.20" cy="469.5" r="1.9" fill="#fff" stroke="#4a86e8" stroke-width="1"/><circle cx="698" cy="514.5" r="2.2" fill="#fff" stroke="#2f5fb8" stroke-width="1.2"/><circle cx="812" cy="514.5" r="2.2" fill="#fff" stroke="#4a86e8" stroke-width="1.2"/></svg>
<div class="t" style="left:626.50px;top:431.10px;font-size:8.2px;font-weight:400;color:#2c3038;letter-spacing:-0.397px;">$0.025</div>
<div class="t" style="left:631.00px;top:441.70px;font-size:8.2px;font-weight:400;color:#2c3038;letter-spacing:-0.464px;">$0.02</div>
<div class="t" style="left:626.50px;top:452.20px;font-size:8.2px;font-weight:400;color:#2c3038;letter-spacing:-0.397px;">$0.015</div>
<div class="t" style="left:631.00px;top:462.80px;font-size:8.2px;font-weight:400;color:#2c3038;letter-spacing:-0.464px;">$0.01</div>
<div class="t" style="left:626.50px;top:473.30px;font-size:8.2px;font-weight:400;color:#2c3038;letter-spacing:-0.397px;">$0.005</div>
<div class="t" style="left:641.10px;top:483.90px;font-size:8.2px;font-weight:400;color:#2c3038;letter-spacing:-0.511px;">$0</div>
<div class="t" style="left:632.85px;top:491.60px;font-size:8.2px;font-weight:400;color:#2c3038;letter-spacing:-0.354px;">04 Oct, 2025</div>
<div class="t" style="left:690.95px;top:491.60px;font-size:8.2px;font-weight:400;color:#2c3038;letter-spacing:-0.354px;">09 Oct, 2025</div>
<div class="t" style="left:749.05px;top:491.60px;font-size:8.2px;font-weight:400;color:#2c3038;letter-spacing:-0.354px;">14 Oct, 2025</div>
<div class="t" style="left:807.15px;top:491.60px;font-size:8.2px;font-weight:400;color:#2c3038;letter-spacing:-0.354px;">19 Oct, 2025</div>
<div class="t" style="left:865.25px;top:491.60px;font-size:8.2px;font-weight:400;color:#2c3038;letter-spacing:-0.354px;">24 Oct, 2025</div>
<div class="t" style="left:923.35px;top:491.60px;font-size:8.2px;font-weight:400;color:#2c3038;letter-spacing:-0.354px;">29 Oct, 2025</div>
<div class="t" style="left:703.80px;top:511.40px;font-size:8.2px;font-weight:400;color:#2c3038;letter-spacing:-0.359px;">Average Price per vCPU-Hour</div>
<div class="t" style="left:818.30px;top:511.40px;font-size:8.2px;font-weight:400;color:#2c3038;letter-spacing:-0.328px;">Average Price per GiB-Hour</div>
<div class="a" style="left:16.6px;top:558.3px;width:81px;height:34px;border-left:1px solid #eef0f3;border-right:1px solid #eef0f3;box-sizing:border-box;"></div>
<div class="a" style="left:16.6px;top:558.3px;width:81px;height:3.1px;background:#2f6fe0;"></div>
<svg class="a" style="left:0;top:0" width="60" height="600"><path d="M37.62 575.89 L38.67 576.09 L38.67 577.11 L37.62 577.31 L37.18 578.38 L37.78 579.26 L37.06 579.98 L36.18 579.38 L35.11 579.82 L34.91 580.87 L33.89 580.87 L33.69 579.82 L32.62 579.38 L31.74 579.98 L31.02 579.26 L31.62 578.38 L31.18 577.31 L30.13 577.11 L30.13 576.09 L31.18 575.89 L31.62 574.82 L31.02 573.94 L31.74 573.22 L32.62 573.82 L33.69 573.38 L33.89 572.33 L34.91 572.33 L35.11 573.38 L36.18 573.82 L37.06 573.22 L37.78 573.94 L37.18 574.82 Z" fill="none" stroke="#2f6fe0" stroke-width="1.2"/><circle cx="34.4" cy="576.6" r="1.5" fill="none" stroke="#2f6fe0" stroke-width="1"/><circle cx="37.3" cy="579.4" r="2.7" fill="#fff"/><path d="M39.12 578.86 L39.87 578.99 L39.87 579.81 L39.12 579.94 L38.68 580.71 L38.94 581.42 L38.23 581.83 L37.74 581.25 L36.86 581.25 L36.37 581.83 L35.66 581.42 L35.92 580.71 L35.48 579.94 L34.73 579.81 L34.73 578.99 L35.48 578.86 L35.92 578.09 L35.66 577.38 L36.37 576.97 L36.86 577.55 L37.74 577.55 L38.23 576.97 L38.94 577.38 L38.68 578.09 Z" fill="none" stroke="#2f6fe0" stroke-width="1"/></svg>
<div class="t" style="left:42.60px;top:573.80px;font-size:9.2px;font-weight:700;color:#2d3440;letter-spacing:-0.227px;">Instances</div>
<svg class="a" style="left:14px;top:610px" width="994" height="113"><rect x="2.60" y="2.40" width="988.40" height="107.60" rx="6" fill="none" stroke="#e9ecf0" stroke-width="1.15"/></svg>
<div class="a" style="left:22px;top:604px;width:112px;height:16px;background:#fff;"></div>
<svg class="a" style="left:25.90px;top:602.80px" width="19.2" height="19.2" viewBox="-9.6 -9.6 19.2 19.2"><circle cx="0" cy="0" r="9.6" fill="#2f6fe0"/><path d="M2.33 -1.39 L3.37 -1.19 L3.37 -0.21 L2.33 -0.01 L1.90 1.03 L2.50 1.90 L1.80 2.60 L0.93 2.00 L-0.11 2.43 L-0.31 3.47 L-1.29 3.47 L-1.49 2.43 L-2.53 2.00 L-3.40 2.60 L-4.10 1.90 L-3.50 1.03 L-3.93 -0.01 L-4.97 -0.21 L-4.97 -1.19 L-3.93 -1.39 L-3.50 -2.43 L-4.10 -3.30 L-3.40 -4.00 L-2.53 -3.40 L-1.49 -3.83 L-1.29 -4.87 L-0.31 -4.87 L-0.11 -3.83 L0.93 -3.40 L1.80 -4.00 L2.50 -3.30 L1.90 -2.43 Z" fill="none" stroke="#fff" stroke-width="0.9"/><path d="M-0.8 -0.7 m-1.3 0 a1.3 1.3 0 1 0 2.6 0 a1.3 1.3 0 1 0 -2.6 0" fill="none" stroke="#fff" stroke-width="0.8"/><circle cx="2" cy="2.2" r="2.7" fill="#2f6fe0"/><path d="M3.73 1.69 L4.47 1.81 L4.47 2.59 L3.73 2.71 L3.31 3.44 L3.57 4.14 L2.90 4.53 L2.42 3.95 L1.58 3.95 L1.10 4.53 L0.43 4.14 L0.69 3.44 L0.27 2.71 L-0.47 2.59 L-0.47 1.81 L0.27 1.69 L0.69 0.96 L0.43 0.26 L1.10 -0.13 L1.58 0.45 L2.42 0.45 L2.90 -0.13 L3.57 0.26 L3.31 0.96 Z" fill="none" stroke="#fff" stroke-width="0.8"/><circle cx="2" cy="2.2" r="0.7" fill="#fff"/></svg>
<div class="t" style="left:48.80px;top:607.40px;font-size:11.4px;font-weight:400;color:#2a2e35;-webkit-text-stroke:0.65px #2a2e35;letter-spacing:-0.138px;">Instances (2)</div>
<div class="a" style="left:117.4px;top:605.8px;width:13.2px;height:13.2px;background:#e7e9ec;border-radius:50%;"></div>
<div class="t" style="left:119.70px;top:609.00px;font-size:7px;font-weight:400;color:#a3a8b0;letter-spacing:-0.303px;">RT</div>
<div class="a" style="left:911.4px;top:600.4px;width:84px;height:24px;background:#fff;border:1px solid #e6e8eb;border-radius:12px;box-sizing:border-box;"></div>
<svg class="a" style="left:922.5px;top:609px" width="9" height="7" viewBox="0 0 9 7">
<path d="M7.6 2.2 Q6.4 0.5 4.3 0.6 Q2.3 0.7 1.3 2.3 M1.4 4.8 Q2.6 6.5 4.7 6.4 Q6.7 6.3 7.7 4.7" fill="none" stroke="#7b828c" stroke-width="0.9" stroke-linecap="round"/>
<path d="M8.2 0.6 L7.9 2.7 L5.9 2.4 M0.8 6.4 L1.1 4.3 L3.1 4.6" fill="none" stroke="#7b828c" stroke-width="0.9" stroke-linecap="round" stroke-linejoin="round"/>
</svg>
<div class="t" style="left:933.70px;top:608.30px;font-size:9.3px;font-weight:400;color:#2d3440;letter-spacing:-0.283px;">Refresh Data</div>
<div class="a" style="left:27px;top:631px;width:977.5px;height:29.6px;background:linear-gradient(#f6f7f9 0%,#f2f3f6 60%,#e9ebef 100%);"></div>
<div class="a" style="left:27px;top:660.6px;width:977.5px;height:6px;background:#dce2ed;"></div>
<div class="t" style="left:38.10px;top:642.60px;font-size:8px;font-weight:700;color:#6b7380;letter-spacing:-0.315px;">AUTO SCALING GROUP NAME</div>
<svg class="a" style="left:256.9px;top:642.5px" width="7.5" height="6" viewBox="0 0 7.5 6"><path d="M0 0.6 H7.5 M0 3 H7.5 M0 5.4 H7.5" stroke="#5f6670" stroke-width="1"/></svg>
<div class="a" style="left:276.6px;top:641.8px;width:1px;height:8.6px;background:#e1e4e8;"></div>
<div class="t" style="left:288.00px;top:642.60px;font-size:8px;font-weight:700;color:#6b7380;letter-spacing:-0.229px;">INSTANCE ID</div>
<svg class="a" style="left:436.6px;top:642.5px" width="7.5" height="6" viewBox="0 0 7.5 6"><path d="M0 0.6 H7.5 M0 3 H7.5 M0 5.4 H7.5" stroke="#5f6670" stroke-width="1"/></svg>
<div class="a" style="left:456.3px;top:641.8px;width:1px;height:8.6px;background:#e1e4e8;"></div>
<div class="t" style="left:467.80px;top:642.60px;font-size:8px;font-weight:700;color:#6b7380;letter-spacing:-0.322px;">INSTANCE DETAILS</div>
<svg class="a" style="left:616.6px;top:642.5px" width="7.5" height="6" viewBox="0 0 7.5 6"><path d="M0 0.6 H7.5 M0 3 H7.5 M0 5.4 H7.5" stroke="#5f6670" stroke-width="1"/></svg>
<div class="a" style="left:635.6px;top:641.8px;width:1px;height:8.6px;background:#e1e4e8;"></div>
<svg class="a" style="left:648.5px;top:642px" width="6" height="7.5" viewBox="0 0 6 7.5"><path d="M3 0 V6.8 M0.5 4.3 L3 6.8 L5.5 4.3" fill="none" stroke="#4b525d" stroke-width="1.1"/></svg>
<div class="t" style="left:656.70px;top:642.60px;font-size:8px;font-weight:700;color:#6b7380;letter-spacing:-0.137px;">UPTIME</div>
<svg class="a" style="left:795.4px;top:642.5px" width="7.5" height="6" viewBox="0 0 7.5 6"><path d="M0 0.6 H7.5 M0 3 H7.5 M0 5.4 H7.5" stroke="#5f6670" stroke-width="1"/></svg>
<div class="a" style="left:815.3px;top:641.8px;width:1px;height:8.6px;background:#e1e4e8;"></div>
<svg class="a" style="left:829px;top:641.5px" width="5" height="8" viewBox="0 0 5 8"><path d="M0.5 2.8 L2.5 0.8 L4.5 2.8 M0.5 5.2 L2.5 7.2 L4.5 5.2" fill="none" stroke="#4b525d" stroke-width="1"/></svg>
<div class="t" style="left:836.90px;top:642.60px;font-size:8px;font-weight:700;color:#6b7380;letter-spacing:-0.393px;">EFFECTIVE SAVINGS RATE</div>
<svg class="a" style="left:974.7px;top:642.5px" width="7.5" height="6" viewBox="0 0 7.5 6"><path d="M0 0.6 H7.5 M0 3 H7.5 M0 5.4 H7.5" stroke="#5f6670" stroke-width="1"/></svg>
<svg class="a" style="left:982px;top:624.5px;filter:drop-shadow(0 0 8px rgba(0,0,0,0.10))" width="30.2" height="30.2" viewBox="0 0 30.2 30.2">
<circle cx="15.1" cy="15.1" r="15.1" fill="#36598e"/>
<path d="M8.8 8.9 Q8.4 7.3 10 7.3 H20.6 Q22 7.3 22 8.8 V23.2 L19.2 21.3 H10 Q8.8 21.3 8.8 20 Z" fill="#fff"/>
<path d="M11.4 16.6 Q15.4 19 19.4 16.6" fill="none" stroke="#36598e" stroke-width="1.1" stroke-linecap="round"/>
</svg>
</body></html>
